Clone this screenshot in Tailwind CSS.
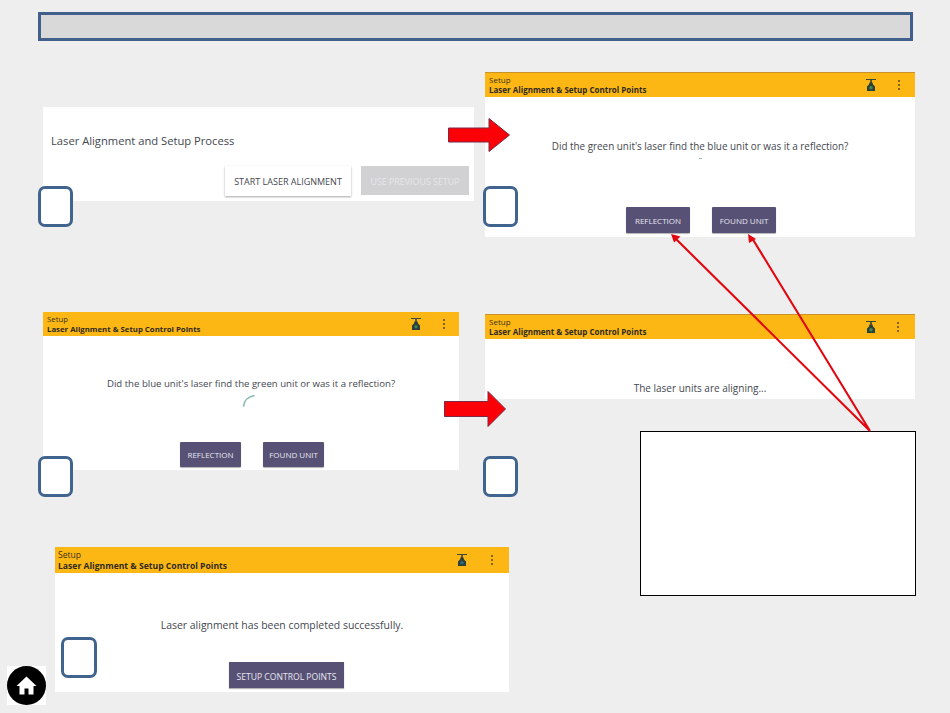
<!DOCTYPE html>
<html>
<head>
<meta charset="utf-8">
<script src="https://cdn.jsdelivr.net/npm/@tailwindcss/browser@4"></script>
</head>
<body class="m-0">
<div class="relative w-[950px] h-[713px] overflow-hidden bg-[#eeeeee] font-['Open_Sans',sans-serif] text-[#444750]">

  <div class="absolute left-[38px] top-[12px] w-[875px] h-[29px] bg-[#d9d9d9] border-[3px] border-[#41618a]"></div>

  <!-- Panel 1 -->
  <div class="absolute left-[43px] top-[107px] w-[431px] h-[94px] bg-white flex flex-col">
    <div class="pl-[8px] pt-[26px] text-[11.2px] leading-[16px]">Laser Alignment and Setup Process</div>
    <div class="mt-[17px] pr-[5px] flex justify-end gap-[10px] text-[9px]">
      <div class="w-[126px] h-[30px] pt-[1px] bg-white shadow-[0_1px_2px_rgba(0,0,0,0.35)] flex items-center justify-center">START LASER ALIGNMENT</div>
      <div class="w-[108px] h-[29px] pt-[3px] bg-[#d1d1d4] text-[#e6e6e8] flex items-center justify-center text-[8.9px]">USE PREVIOUS SETUP</div>
    </div>
  </div>

  <!-- Panel 2 -->
  <div class="absolute left-[485px] top-[72px] w-[430px] h-[165px] bg-white flex flex-col">
    <div class="h-[25px] shrink-0 bg-[#fdb714] border-t border-[#c9932a] flex items-center justify-between pl-[4px] pr-[14px] text-[#3a3220]">
      <div class="flex flex-col text-[8px] leading-[10.5px]"><span>Setup</span><span class="font-bold text-[#2f2a20]">Laser Alignment &amp; Setup Control Points</span></div>
      <div class="flex items-center gap-[20px]">
        <svg width="12" height="14" viewBox="0 0 12 14"><path d="M1 1.5h10" stroke="#3a4a3a" stroke-width="1"/><path d="M6 2v3" stroke="#2e3a33" stroke-width="1.5"/><path d="M4.5 4.5h3l.5 2 2 2V13H2V8.5l2-2z" fill="#2e3f3a"/><circle cx="6" cy="9.8" r="1.7" fill="#3f8f4f"/></svg>
        <svg width="4" height="12" viewBox="0 0 4 12"><circle cx="2" cy="2" r="1" fill="#5a4a20"/><circle cx="2" cy="6" r="1" fill="#5a4a20"/><circle cx="2" cy="10" r="1" fill="#5a4a20"/></svg>
      </div>
    </div>
    <div class="mt-[41px] text-center text-[9.9px] leading-[16px]">Did the green unit's laser find the blue unit or was it a reflection?</div>
    <div class="mx-auto mt-[4px] w-[3px] h-[1px] bg-[#9fb5b5]"></div>
    <div class="mt-[48px] ml-[141px] flex gap-[22px] text-[8px] text-[#e8e6f0]">
      <div class="w-[64px] h-[26px] pt-[2px] bg-[#565175] rounded-[1px] shadow-[0_1px_1px_rgba(0,0,0,0.3)] flex items-center justify-center">REFLECTION</div>
      <div class="w-[64px] h-[26px] pt-[2px] bg-[#565175] rounded-[1px] shadow-[0_1px_1px_rgba(0,0,0,0.3)] flex items-center justify-center">FOUND UNIT</div>
    </div>
  </div>

  <!-- Panel 3 -->
  <div class="absolute left-[43px] top-[312px] w-[416px] h-[158px] bg-white flex flex-col">
    <div class="h-[24px] shrink-0 bg-[#fdb714] flex items-center justify-between pl-[4px] pr-[13px] text-[#3a3220]">
      <div class="flex flex-col text-[7.8px] leading-[10.5px]"><span>Setup</span><span class="font-bold text-[#2f2a20]">Laser Alignment &amp; Setup Control Points</span></div>
      <div class="flex items-center gap-[20px]">
        <svg width="12" height="14" viewBox="0 0 12 14"><path d="M1 1.5h10" stroke="#3a4a3a" stroke-width="1"/><path d="M6 2v3" stroke="#2e3a33" stroke-width="1.5"/><path d="M4.5 4.5h3l.5 2 2 2V13H2V8.5l2-2z" fill="#2e3f3a"/><circle cx="6" cy="9.8" r="1.7" fill="#3f7f55"/></svg>
        <svg width="4" height="12" viewBox="0 0 4 12"><circle cx="2" cy="2" r="1" fill="#5a4a20"/><circle cx="2" cy="6" r="1" fill="#5a4a20"/><circle cx="2" cy="10" r="1" fill="#5a4a20"/></svg>
      </div>
    </div>
    <div class="mt-[40px] text-center text-[9.6px] leading-[16px]">Did the blue unit's laser find the green unit or was it a reflection?</div>
    <svg class="mt-[2px] ml-[199px]" width="14" height="14" viewBox="0 0 14 14"><path d="M1.5 12.5C2 7 6 2.5 12.5 1.5" fill="none" stroke="#7fb5ae" stroke-width="1.7"/></svg>
    <div class="mt-[34px] pl-[137px] flex gap-[22px] text-[8px] text-[#e8e6f0]">
      <div class="w-[61px] h-[25px] bg-[#565175] rounded-[1px] shadow-[0_1px_1px_rgba(0,0,0,0.3)] flex items-center justify-center">REFLECTION</div>
      <div class="w-[61px] h-[25px] bg-[#565175] rounded-[1px] shadow-[0_1px_1px_rgba(0,0,0,0.3)] flex items-center justify-center">FOUND UNIT</div>
    </div>
  </div>

  <!-- Panel 4 -->
  <div class="absolute left-[485px] top-[314px] w-[430px] h-[85px] bg-white flex flex-col">
    <div class="h-[25px] shrink-0 bg-[#fdb714] border-t border-[#c9932a] flex items-center justify-between pl-[4px] pr-[15px] text-[#3a3220]">
      <div class="flex flex-col text-[8px] leading-[10.5px]"><span>Setup</span><span class="font-bold text-[#2f2a20]">Laser Alignment &amp; Setup Control Points</span></div>
      <div class="flex items-center gap-[19px]">
        <svg width="12" height="14" viewBox="0 0 12 14"><path d="M1 1.5h10" stroke="#3a4a3a" stroke-width="1"/><path d="M6 2v3" stroke="#2e3a33" stroke-width="1.5"/><path d="M4.5 4.5h3l.5 2 2 2V13H2V8.5l2-2z" fill="#2e3f3a"/><circle cx="6" cy="9.8" r="1.7" fill="#3f8f4f"/></svg>
        <svg width="4" height="12" viewBox="0 0 4 12"><circle cx="2" cy="2" r="1" fill="#5a4a20"/><circle cx="2" cy="6" r="1" fill="#5a4a20"/><circle cx="2" cy="10" r="1" fill="#5a4a20"/></svg>
      </div>
    </div>
    <div class="mt-[41px] text-center text-[10px] leading-[16px]">The laser units are aligning...</div>
  </div>

  <!-- Panel 5 -->
  <div class="absolute left-[55px] top-[547px] w-[454px] h-[145px] bg-white flex flex-col">
    <div class="h-[26px] shrink-0 bg-[#fdb714] flex items-center justify-between pl-[3px] pr-[15px] text-[#3a3220]">
      <div class="flex flex-col text-[8.6px] leading-[11px] pt-[1px]"><span>Setup</span><span class="font-bold text-[#2f2a20]">Laser Alignment &amp; Setup Control Points</span></div>
      <div class="flex items-center gap-[22px]">
        <svg width="12" height="14" viewBox="0 0 12 14"><path d="M1 1.5h10" stroke="#3a4a3a" stroke-width="1"/><path d="M6 2v3" stroke="#2e3a33" stroke-width="1.5"/><path d="M4.5 4.5h3l.5 2 2 2V13H2V8.5l2-2z" fill="#2e3f3a"/><circle cx="6" cy="9.8" r="1.7" fill="#2f6f80"/></svg>
        <svg width="4" height="12" viewBox="0 0 4 12"><circle cx="2" cy="2" r="1" fill="#5a4a20"/><circle cx="2" cy="6" r="1" fill="#5a4a20"/><circle cx="2" cy="10" r="1" fill="#5a4a20"/></svg>
      </div>
    </div>
    <div class="mt-[44px] text-center text-[10.45px] leading-[16px]">Laser alignment has been completed successfully.</div>
    <div class="mt-[29px] ml-[174px] w-[115px] h-[26px] pt-[4px] bg-[#565175] shadow-[0_1px_1px_rgba(0,0,0,0.3)] flex items-center justify-center text-[8.6px] text-[#e8e6f0]">SETUP CONTROL POINTS</div>
  </div>

  <!-- Rounded squares -->
  <div class="absolute left-[38px] top-[186px] w-[35px] h-[41px] bg-white border-[3px] border-[#41648f] rounded-[7px]"></div>
  <div class="absolute left-[483px] top-[186px] w-[35px] h-[41px] bg-white border-[3px] border-[#41648f] rounded-[7px]"></div>
  <div class="absolute left-[38px] top-[456px] w-[35px] h-[41px] bg-white border-[3px] border-[#41648f] rounded-[7px]"></div>
  <div class="absolute left-[483px] top-[456px] w-[35px] h-[41px] bg-white border-[3px] border-[#41648f] rounded-[7px]"></div>
  <div class="absolute left-[61px] top-[637px] w-[36px] h-[41px] bg-white border-[3px] border-[#41648f] rounded-[7px]"></div>

  <!-- Red arrows -->
  <svg class="absolute left-[447px] top-[117px]" width="64" height="36" viewBox="0 0 64 36"><path d="M1.5 11H42V1.5L62.5 18 42 34.5V25H1.5z" fill="#fb0007" stroke="#7a2a45" stroke-width="1"/></svg>
  <svg class="absolute left-[443px] top-[390px]" width="64" height="38" viewBox="0 0 64 38"><path d="M1.5 11.5H45V1.5L62.5 19 45 36.5V26.5H1.5z" fill="#fb0007" stroke="#7a2a45" stroke-width="1"/></svg>

  <!-- Callout box -->
  <div class="absolute left-[640px] top-[431px] w-[276px] h-[165px] bg-white border border-black"></div>

  <!-- Callout lines -->
  <svg class="absolute left-0 top-0" width="950" height="713" viewBox="0 0 950 713">
    <path d="M870 431 676 239M870 431 752 238" stroke="#e2060f" stroke-width="2.1" fill="none"/>
    <path d="M671 234 680.5 236.5 674 242.5z" fill="#e2060f"/>
    <path d="M748 234 756 239 749 243z" fill="#e2060f"/>
  </svg>

  <!-- Home -->
  <div class="absolute left-[7px] top-[666px] w-[39px] h-[39px] bg-white">
    <div class="w-[39px] h-[39px] rounded-full bg-black flex items-center justify-center">
      <svg width="21" height="19" viewBox="0 0 21 19"><path d="M10.5 0.5 0.5 10h3v8.5h5v-6h4v6h5V10h3z" fill="#fff"/></svg>
    </div>
  </div>
</div>
</body>
</html>
